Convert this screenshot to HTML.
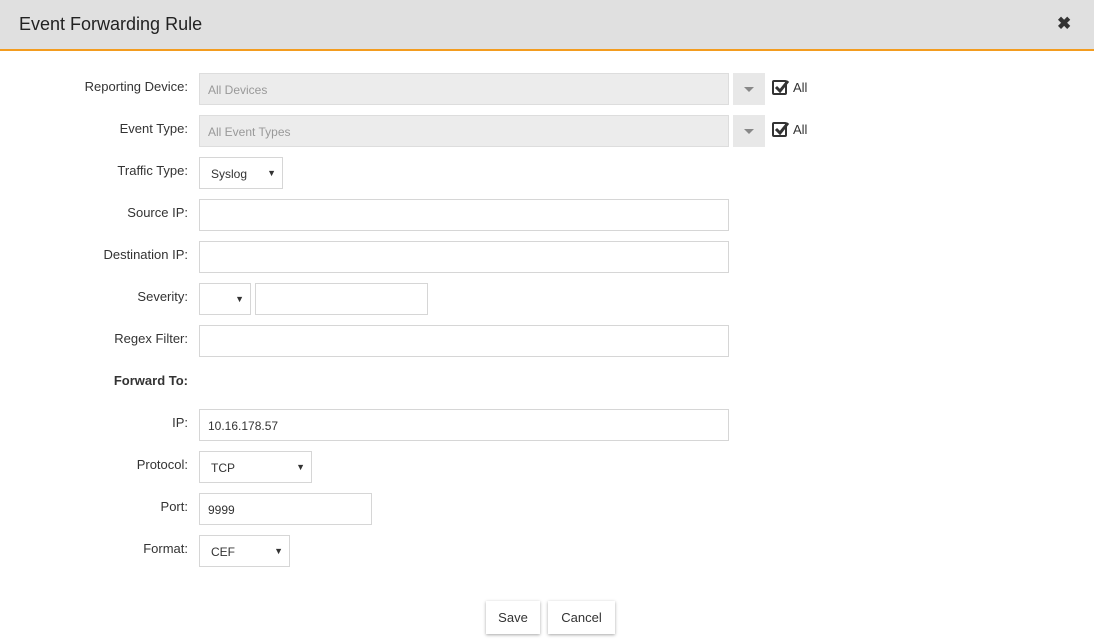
<!DOCTYPE html>
<html><head><meta charset="utf-8"><style>
*{box-sizing:border-box;margin:0;padding:0}
body{width:1094px;height:642px;background:#fff;font-family:"Liberation Sans",sans-serif;color:#333;position:relative;overflow:hidden}
.hdr{position:absolute;left:0;top:0;width:1094px;height:51px;background:#e0e0e0;border-bottom:2px solid #f39c1f}
.title{position:absolute;left:19px;top:14px;font-size:18px;color:#222}
.x{position:absolute;left:1057px;top:14px;font-size:17px;font-weight:bold;color:#333}
.lbl{position:absolute;right:906px;font-size:13px;color:#333;white-space:nowrap}
.in{position:absolute;left:199px;height:32px;border:1px solid #d6d6d6;background:#fff;font-size:12px;padding:9px 0 0 8px;color:#333}
.dis{background:#ececec;color:#999;border-color:#ddd}
.dd{position:absolute;left:733px;width:32px;height:32px;background:#e8e8e8}
.dd:after{content:"";position:absolute;left:11px;top:14px;border-left:5px solid transparent;border-right:5px solid transparent;border-top:5px solid #888}
.sel:after{content:"▼";position:absolute;right:6px;top:10px;font-size:9px;color:#333}
.sel{padding-left:11px}
.cb{position:absolute;left:772px;width:15px;height:15px;border:2px solid #333;border-radius:2px}
.cb svg{position:absolute;left:0;top:-4px}
.all{position:absolute;left:793px;font-size:13px}
.btn{position:absolute;top:601px;height:33px;background:#fff;box-shadow:0 1px 3px rgba(0,0,0,.35);font-size:13px;text-align:center;padding-top:9px;color:#333}
</style></head><body>
<div class="hdr"><div class="title">Event Forwarding Rule</div><div class="x">✖</div></div>

<div class="lbl" style="top:79px">Reporting Device:</div>
<div class="in dis" style="top:73px;width:530px">All Devices</div>
<div class="dd" style="top:73px"></div>
<div class="cb" style="top:80px"><svg width="16" height="16" viewBox="0 0 16 16"><path d="M2 9 L6 13 L14 3" stroke="#333" stroke-width="3" fill="none"/></svg></div>
<div class="all" style="top:80px">All</div>

<div class="lbl" style="top:121px">Event Type:</div>
<div class="in dis" style="top:115px;width:530px">All Event Types</div>
<div class="dd" style="top:115px"></div>
<div class="cb" style="top:122px"><svg width="16" height="16" viewBox="0 0 16 16"><path d="M2 9 L6 13 L14 3" stroke="#333" stroke-width="3" fill="none"/></svg></div>
<div class="all" style="top:122px">All</div>

<div class="lbl" style="top:163px">Traffic Type:</div>
<div class="in sel" style="top:157px;width:84px">Syslog</div>

<div class="lbl" style="top:205px">Source IP:</div>
<div class="in" style="top:199px;width:530px"></div>

<div class="lbl" style="top:247px">Destination IP:</div>
<div class="in" style="top:241px;width:530px"></div>

<div class="lbl" style="top:289px">Severity:</div>
<div class="in sel" style="top:283px;width:52px"></div>
<div class="in" style="top:283px;left:255px;width:173px"></div>

<div class="lbl" style="top:331px">Regex Filter:</div>
<div class="in" style="top:325px;width:530px"></div>

<div class="lbl" style="top:373px;font-weight:bold">Forward To:</div>

<div class="lbl" style="top:415px">IP:</div>
<div class="in" style="top:409px;width:530px">10.16.178.57</div>

<div class="lbl" style="top:457px">Protocol:</div>
<div class="in sel" style="top:451px;width:113px">TCP</div>

<div class="lbl" style="top:499px">Port:</div>
<div class="in" style="top:493px;width:173px">9999</div>

<div class="lbl" style="top:541px">Format:</div>
<div class="in sel" style="top:535px;width:91px">CEF</div>

<div class="btn" style="left:486px;width:54px">Save</div>
<div class="btn" style="left:548px;width:67px">Cancel</div>
</body></html>
